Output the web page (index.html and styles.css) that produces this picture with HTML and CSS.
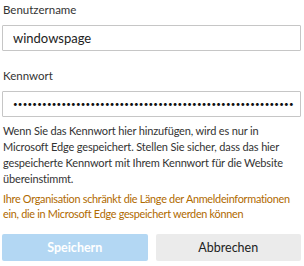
FILE: index.html
```html
<!DOCTYPE html>
<html lang="de">

<head>
    <meta charset="UTF-8">
    <meta name="viewport" content="width=device-width, initial-scale=1.0">
    <title>Kennwort speichern</title>
    <link rel="stylesheet" href="styles.css">
</head>

<body>
    <div class="form">
        <label class="label" for="user">Benutzername</label>
        <input class="field" id="user" type="text" value="windowspage" autocomplete="off">

        <label class="label" for="pass">Kennwort</label>
        <div class="field dots" id="pass">••••••••••••••••••••••••••••••••••••••••••••••••••••••••••</div>

        <p class="note">Wenn Sie das Kennwort hier hinzufügen, wird es nur in Microsoft Edge gespeichert. Stellen Sie sicher, dass das hier gespeicherte Kennwort mit Ihrem Kennwort für die Website übereinstimmt.</p>
        <p class="warn">Ihre Organisation schränkt die Länge der Anmeldeinformationen ein, die in Microsoft Edge gespeichert werden können</p>

        <div class="buttons">
            <button class="btn save" disabled>Speichern</button>
            <button class="btn cancel">Abbrechen</button>
        </div>
    </div>
</body>

</html>
```

FILE: styles.css
```css
body {
    margin: 0;
    background: #fff;
    font-family: Lato, "Open Sans", sans-serif;
    color: #333;
}

.form {
    display: flex;
    flex-direction: column;
    padding: 2px 3px 0 2px;
}

.label {
    font-size: 11.5px;
    line-height: 16px;
    margin: 0 0 7px 1px;
}

.field {
    box-sizing: border-box;
    width: 100%;
    height: 26px;
    border: 1px solid #c6c6c6;
    border-radius: 1px;
    padding: 0 10px;
    font-family: inherit;
    font-size: 13px;
    color: #222;
    margin-bottom: 17px;
    outline: none;
}

.dots {
    display: flex;
    align-items: center;
    overflow: hidden;
    white-space: nowrap;
    padding-right: 2px;
    font-size: 8px;
    letter-spacing: 0.2px;
    color: #111;
    margin-bottom: 6px;
}

.note,
.warn {
    font-size: 11px;
    letter-spacing: -0.15px;
    line-height: 16px;
    margin: 0 0 4px 1px;
}

.warn {
    color: #b06a00;
    font-size: 10.9px;
    letter-spacing: -0.3px;
    line-height: 15px;
    margin-bottom: 13px;
}

.buttons {
    display: flex;
    gap: 8px;
}

.btn {
    flex: 1;
    height: 27px;
    border: none;
    border-radius: 2px;
    font-family: inherit;
    font-size: 12.5px;
}

.save {
    background: #b3d7f3;
    color: #fff;
    font-weight: bold;
}

.cancel {
    background: #ebebeb;
    color: #222;
}
```
